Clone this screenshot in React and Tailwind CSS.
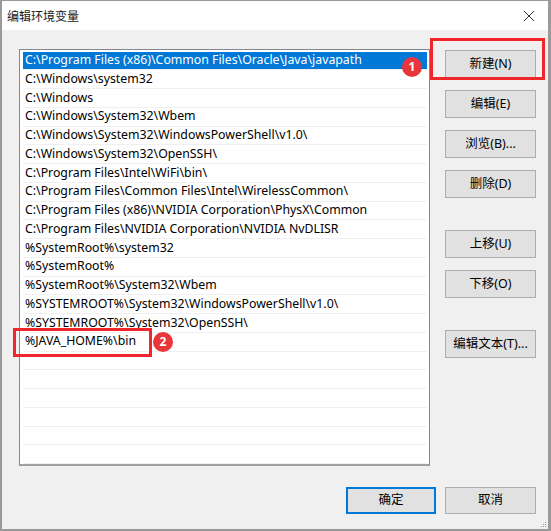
import React from "react";

const items = [
  "C:\\Program Files (x86)\\Common Files\\Oracle\\Java\\javapath",
  "C:\\Windows\\system32",
  "C:\\Windows",
  "C:\\Windows\\System32\\Wbem",
  "C:\\Windows\\System32\\WindowsPowerShell\\v1.0\\",
  "C:\\Windows\\System32\\OpenSSH\\",
  "C:\\Program Files\\Intel\\WiFi\\bin\\",
  "C:\\Program Files\\Common Files\\Intel\\WirelessCommon\\",
  "C:\\Program Files (x86)\\NVIDIA Corporation\\PhysX\\Common",
  "C:\\Program Files\\NVIDIA Corporation\\NVIDIA NvDLISR",
  "%SystemRoot%\\system32",
  "%SystemRoot%",
  "%SystemRoot%\\System32\\Wbem",
  "%SYSTEMROOT%\\System32\\WindowsPowerShell\\v1.0\\",
  "%SYSTEMROOT%\\System32\\OpenSSH\\",
  "%JAVA_HOME%\\bin",
];

const rows = [...items, ...Array(8).fill("")];

function Btn({ children, className = "" }) {
  return (
    <div
      className={
        "w-[91px] h-[28px] bg-[#e1e1e1] border border-[#adadad] flex items-center justify-center text-[12.5px] text-black " +
        className
      }
    >
      {children}
    </div>
  );
}

export default function App() {
  return (
    <div
      className="relative w-[551px] h-[531px] bg-[#f0f0f0] border-l-2 border-r-[3px] border-b-2 border-t border-[#9a9a9a] flex flex-col overflow-hidden"
      style={{ fontFamily: '"Noto Sans", "Noto Sans CJK SC", sans-serif' }}
    >
      {/* title bar */}
      <div className="h-[29px] bg-white flex items-center justify-between pl-[5px] pr-[10px] shrink-0">
        <span className="text-[12px] text-[#1a1a1a]" style={{ fontFamily: '"Noto Sans CJK SC", sans-serif' }}>
          编辑环境变量
        </span>
        <svg width="12" height="12" viewBox="0 0 12 12" className="mr-[3px]">
          <path d="M1 1 L11 11 M11 1 L1 11" stroke="#333" strokeWidth="1" />
        </svg>
      </div>

      {/* main */}
      <div className="flex items-start pl-[17px] shrink-0">
        <div className="mt-[19px] w-[411px] h-[417px] bg-white border border-[#828790] border-b-2 border-b-[#a0a0a0] overflow-hidden pt-[1.5px] pl-[3px] pr-[2px]">
          {rows.map((t, i) => (
            <div
              key={i}
              className={
                "h-[18.75px] flex items-center pl-[2px] border-b border-[#f0f0f0] whitespace-nowrap text-[12.3px] " +
                (i === 0 ? "bg-[#0078d7] text-white" : "text-black")
              }
            >
              {t}
            </div>
          ))}
        </div>
        <div className="ml-[15px] mt-[20px] flex flex-col">
          <Btn>新建(N)</Btn>
          <Btn className="mt-[12px]">编辑(E)</Btn>
          <Btn className="mt-[12px]">浏览(B)...</Btn>
          <Btn className="mt-[12px]">删除(D)</Btn>
          <Btn className="mt-[32px]">上移(U)</Btn>
          <Btn className="mt-[12px]">下移(O)</Btn>
          <Btn className="mt-[32px]">编辑文本(T)...</Btn>
        </div>
      </div>

      {/* bottom buttons */}
      <div className="flex justify-end pr-[12px] mt-[21px] gap-[9px]">
        <div className="w-[90px] h-[27px] bg-[#e1e1e1] border-2 border-[#0078d7] flex items-center justify-center text-[12.5px]">
          确定
        </div>
        <div className="w-[91px] h-[27px] bg-[#e1e1e1] border border-[#adadad] flex items-center justify-center text-[12.5px]">
          取消
        </div>
      </div>

      {/* resize grip */}
      <svg width="6" height="6" viewBox="0 0 6 6" className="absolute right-[1px] bottom-[1px]">
        <rect x="4" y="0" width="1" height="1" fill="#a0a0a0" />
        <rect x="2" y="2" width="1" height="1" fill="#a0a0a0" />
        <rect x="4" y="2" width="1" height="1" fill="#a0a0a0" />
        <rect x="0" y="4" width="1" height="1" fill="#a0a0a0" />
        <rect x="2" y="4" width="1" height="1" fill="#a0a0a0" />
        <rect x="4" y="4" width="1" height="1" fill="#a0a0a0" />
      </svg>

      {/* annotations */}
      <div className="absolute left-[428px] top-[37px] w-[115px] h-[42px] border-[3px] border-[#f0262b]" />
      <div className="absolute left-[400px] top-[56px] w-[20px] h-[20px] rounded-full bg-[#e8363b] text-white text-[12px] font-bold flex items-center justify-center">
        1
      </div>
      <div className="absolute left-[11px] top-[327px] w-[139px] h-[29px] border-[3px] border-[#f0262b]" />
      <div className="absolute left-[151px] top-[331px] w-[20px] h-[20px] rounded-full bg-[#e8363b] text-white text-[12px] font-bold flex items-center justify-center">
        2
      </div>
    </div>
  );
}
